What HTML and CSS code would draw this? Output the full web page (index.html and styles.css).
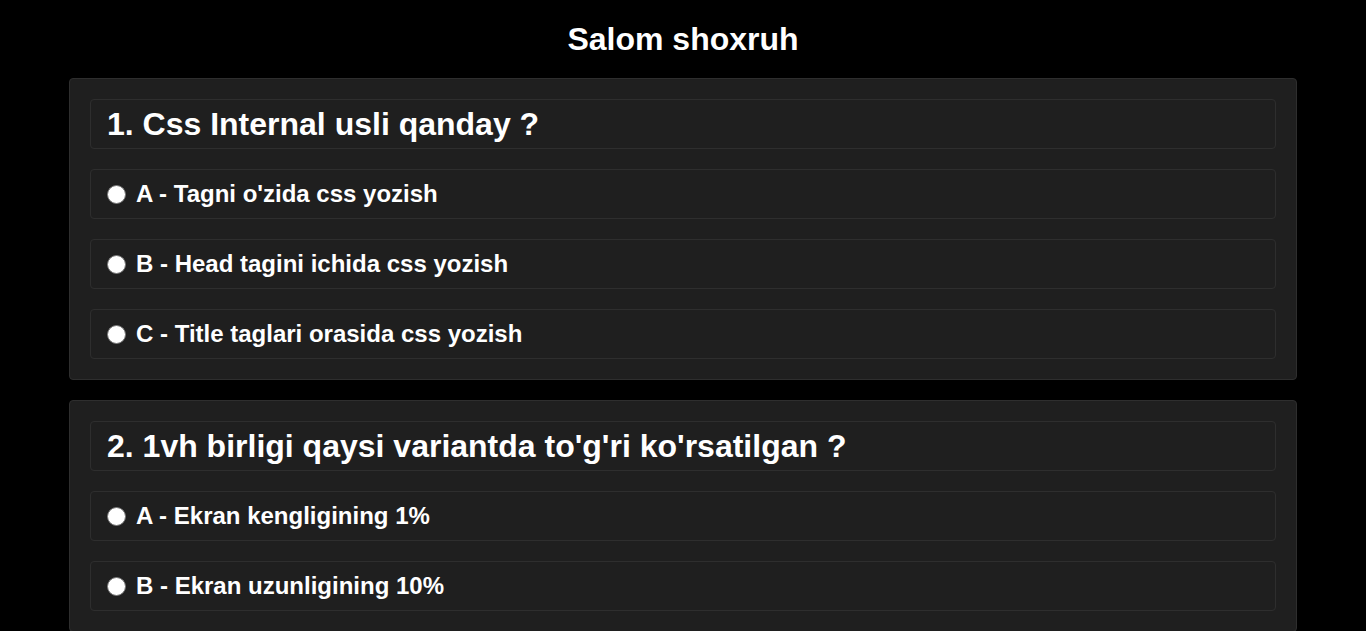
FILE: index.html
```html
<!DOCTYPE html>
<html lang="uz">
<head>
<meta charset="utf-8">
<title>Test</title>
<link rel="stylesheet" href="styles.css">
</head>
<body>
<h1 class="title">Salom shoxruh</h1>
<div class="cards">
  <section class="card">
    <div class="question">1. Css Internal usli qanday ?</div>
    <label class="option"><span class="radio"></span>A - Tagni o'zida css yozish</label>
    <label class="option"><span class="radio"></span>B - Head tagini ichida css yozish</label>
    <label class="option"><span class="radio"></span>C - Title taglari orasida css yozish</label>
  </section>
  <section class="card">
    <div class="question">2. 1vh birligi qaysi variantda to'g'ri ko'rsatilgan ?</div>
    <label class="option"><span class="radio"></span>A - Ekran kengligining 1%</label>
    <label class="option"><span class="radio"></span>B - Ekran uzunligining 10%</label>
  </section>
</div>
</body>
</html>
```
FILE: styles.css
```css
html, body {
  margin: 0;
  padding: 0;
  background: #000;
  color: #fff;
  font-family: "Liberation Sans", Arial, sans-serif;
}
.title {
  margin: 0;
  padding: 20px 0 20px;
  font-size: 32px;
  line-height: 38px;
  font-weight: bold;
  text-align: center;
}
.cards {
  display: flex;
  flex-direction: column;
  gap: 20px;
  padding: 0 69px 20px;
}
.card {
  display: flex;
  flex-direction: column;
  gap: 20px;
  padding: 20px;
  background: #1f1f1f;
  border: 1px solid #2e2e2e;
  border-radius: 4px;
}
.question, .option {
  display: flex;
  align-items: center;
  height: 48px;
  padding: 0 16px;
  border: 1px solid #2e2e2e;
  border-radius: 4px;
  font-weight: bold;
}
.question {
  font-size: 32px;
}
.option {
  font-size: 24px;
  gap: 10px;
  cursor: pointer;
}
.radio {
  width: 17px;
  height: 17px;
  border-radius: 50%;
  background: #fff;
  border: 1px solid #767676;
  flex: none;
}
```
